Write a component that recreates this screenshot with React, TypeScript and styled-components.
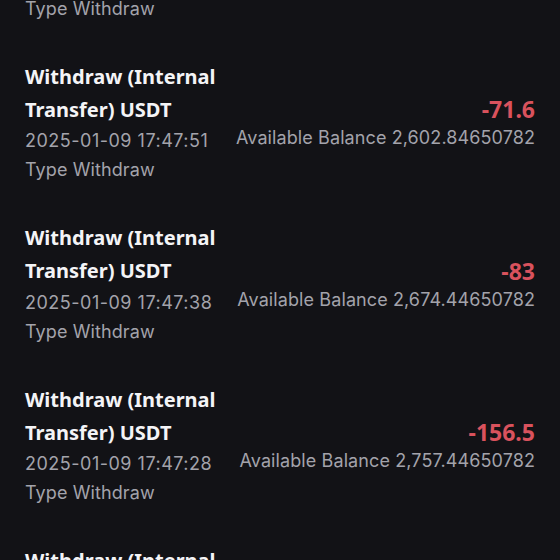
import React from 'react'
import styled, { createGlobalStyle } from 'styled-components'

const GlobalStyle = createGlobalStyle`
  html, body {
    margin: 0;
    padding: 0;
    background: #121216;
    overflow: hidden;
  }
  body {
    font-family: 'Noto Sans', 'Liberation Sans', sans-serif;
  }
`

type Record = {
  title: string
  time: string
  amount: string
  balance: string
}

const records: Record[] = [
  { title: 'Withdraw (Internal Transfer) USDT', time: '2025-01-09 17:47:59', amount: '-50', balance: '2,674.44650782' },
  { title: 'Withdraw (Internal Transfer) USDT', time: '2025-01-09 17:47:51', amount: '-71.6', balance: '2,602.84650782' },
  { title: 'Withdraw (Internal Transfer) USDT', time: '2025-01-09 17:47:38', amount: '-83', balance: '2,674.44650782' },
  { title: 'Withdraw (Internal Transfer) USDT', time: '2025-01-09 17:47:28', amount: '-156.5', balance: '2,757.44650782' },
  { title: 'Withdraw (Internal Transfer) USDT', time: '2025-01-09 17:47:16', amount: '-40', balance: '2,913.94650782' },
]

const App: React.FC = () => {
  return (
    <Page>
      <GlobalStyle />
      <List>
        {records.map((r, i) => (
          <Item key={i}>
            <Title>{r.title}</Title>
            <Right>
              <Amount>{r.amount}</Amount>
              <Balance>Available Balance {r.balance}</Balance>
            </Right>
            <Time>{r.time}</Time>
            <Type>Type Withdraw</Type>
          </Item>
        ))}
      </List>
    </Page>
  )
}

const Page = styled.div`
  width: 560px;
  height: 560px;
  overflow: hidden;
  background: #121216;
`

const List = styled.div`
  margin-top: -102px;
  display: flex;
  flex-direction: column;
`

const Item = styled.div`
  display: grid;
  grid-template-columns: 1fr auto;
  grid-template-rows: auto auto auto;
  padding: 0 25px 37.6px;
  height: 124px;
`

const Title = styled.div`
  grid-column: 1;
  grid-row: 1;
  max-width: 200px;
  color: #f4f4f6;
  font-size: 20px;
  font-weight: 700;
  line-height: 33px;
`

const Right = styled.div`
  grid-column: 2;
  grid-row: 1 / span 2;
  display: flex;
  flex-direction: column;
  align-items: flex-end;
  justify-content: flex-end;
  padding-bottom: 4px;
`

const Amount = styled.div`
  color: #d9525d;
  font-size: 23px;
  font-weight: 700;
  line-height: 30px;
`

const Muted = styled.div`
  color: #a3a3ab;
  font-family: 'Inter', 'Noto Sans', sans-serif;
  font-size: 18px;
  letter-spacing: 0.1px;
`

const Balance = styled(Muted)`
  line-height: 28px;
`

const Time = styled(Muted)`
  grid-column: 1;
  grid-row: 2;
  line-height: 30px;
  letter-spacing: 0.5px;
`

const Type = styled(Muted)`
  grid-column: 1;
  grid-row: 3;
  line-height: 27px;
`

export default App
